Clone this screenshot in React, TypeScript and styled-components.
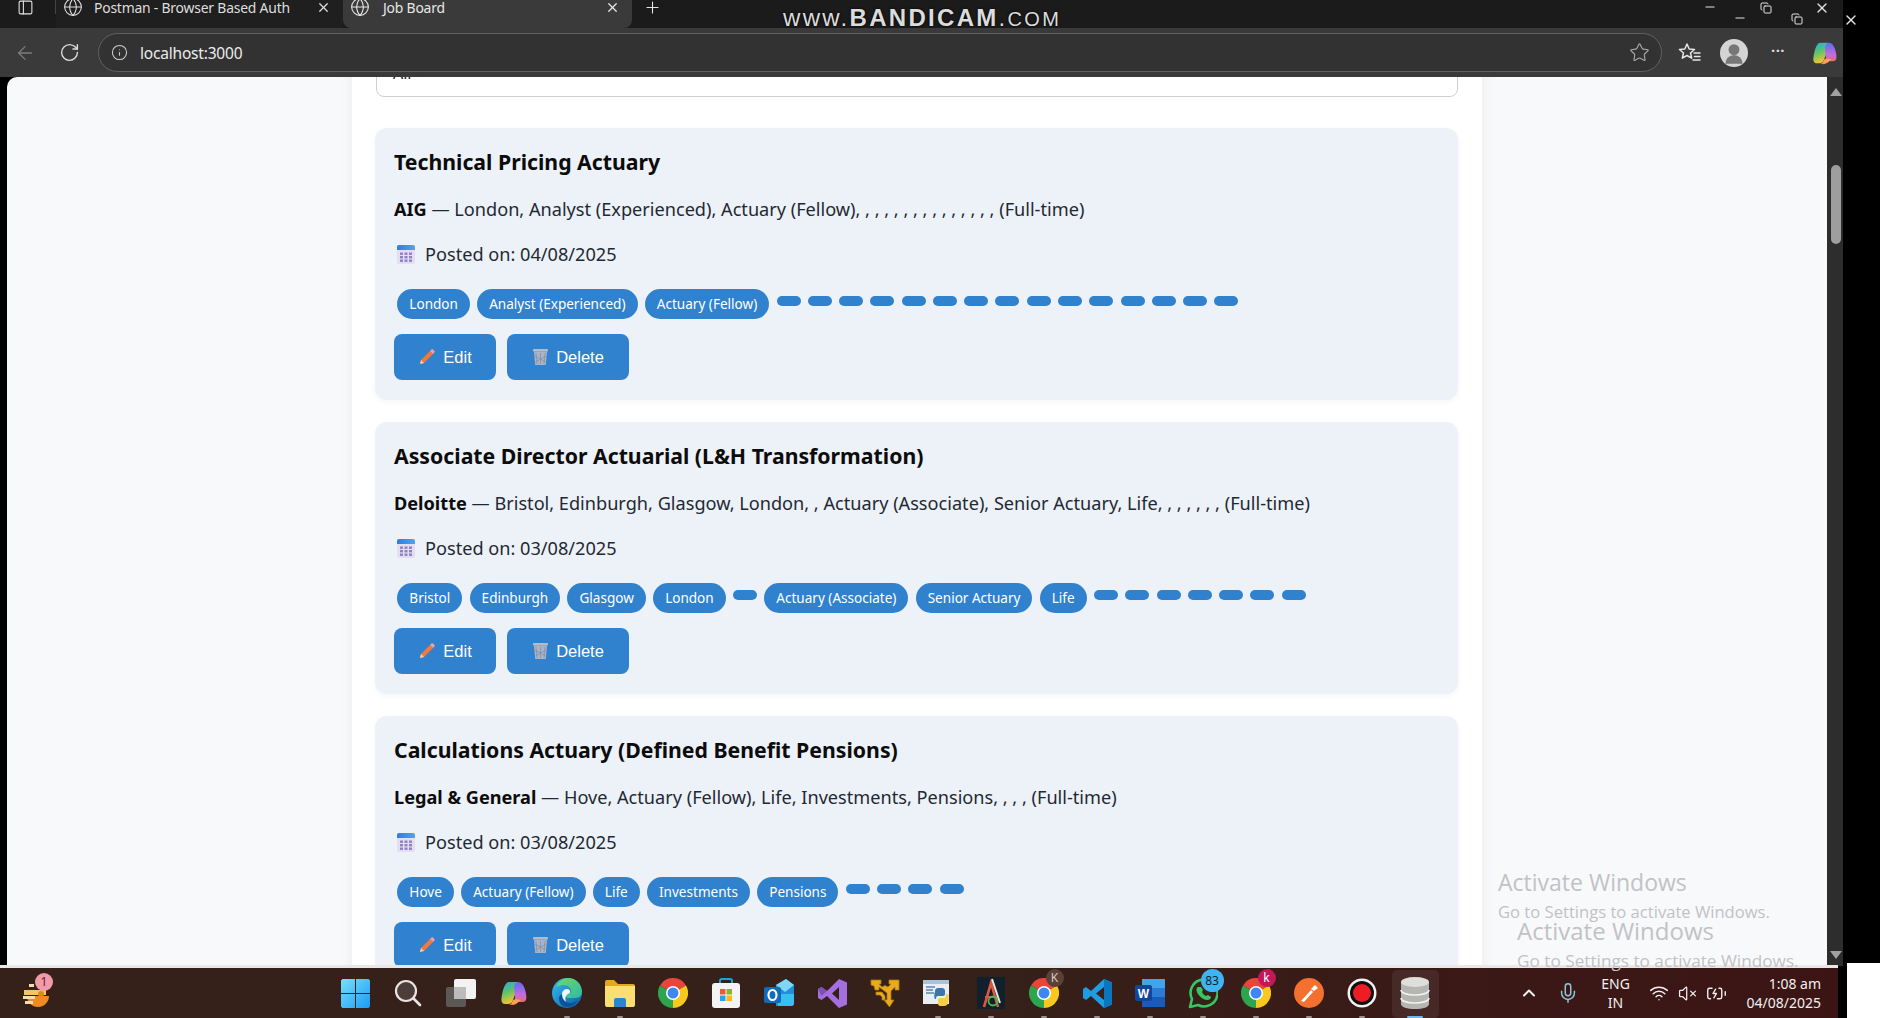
import React from "react";
import styled, { createGlobalStyle } from "styled-components";
import { ArrowLeft, RotateCw, Info, Star, Globe, PanelLeft, Plus, X, Minus, Copy, ChevronUp, Mic, Wifi, VolumeX, BatteryCharging, UserRound } from "lucide-react";

const Global = createGlobalStyle`
  html, body { margin: 0; padding: 0; background: #000; overflow: hidden; }
  * { box-sizing: border-box; }
`;

const UI = `"Noto Sans", "Open Sans", sans-serif`;

const Screen = styled.div`
  position: relative;
  width: 1880px;
  height: 1018px;
  background: #000;
  overflow: hidden;
  display: flex;
  flex-direction: column;
  font-family: ${UI};
`;
const Browser = styled.div`
  width: 1843px;
  height: 966px;
  display: flex;
  flex-direction: column;
  flex: none;
`;
const TitleBar = styled.div`
  height: 28px;
  flex: none;
  background: #1b1b1b;
  display: flex;
  align-items: flex-start;
  color: #e6e6e6;
`;
const SideToggle = styled.div`
  width: 56px;
  height: 14px;
  padding-left: 17px;
  display: flex;
  align-items: center;
  border-right: 1px solid #444;
`;
const Tab = styled.div<{ $active?: boolean }>`
  width: ${(p) => (p.$active ? 289 : 287)}px;
  height: 28px;
  padding: 0 12px 14px 7px;
  display: flex;
  align-items: center;
  gap: ${(p) => (p.$active ? 13 : 11)}px;
  font-size: 13.9px;
  letter-spacing: -0.2px;
  background: ${(p) => (p.$active ? "#3a3a3a" : "#1f1f1f")};
  border-radius: 0 0 ${(p) => (p.$active ? "8px 8px" : "0 0")};
  color: ${(p) => (p.$active ? "#e8e8e8" : "#dedede")};
`;
const TabLabel = styled.span`
  flex: 1;
  white-space: nowrap;
`;
const NewTab = styled.div`
  padding: 0 0 0 11px;
  height: 14px;
  display: flex;
  align-items: center;
`;
const Watermark = styled.div`
  position: absolute;
  left: 783px;
  top: 5px;
  color: #dcdcdc;
  font-family: "Liberation Sans", sans-serif;
  font-size: 24px;
  line-height: 26px;
  letter-spacing: 2.3px;
  white-space: nowrap;
  text-shadow: 0 0 3px #000;
  b { font-weight: 700; }
  small { font-size: 20px; }
`;
const GhostControl = styled.div<{ $x: number; $y: number }>`
  position: absolute;
  left: ${(p) => p.$x}px;
  top: ${(p) => p.$y}px;
  color: #e4e4e4;
  display: flex;
`;
const Toolbar = styled.div`
  height: 49px;
  flex: none;
  background: #3a3a3a;
  display: flex;
  align-items: center;
  color: #d8d8d8;
`;
const NavButton = styled.div<{ $w: number; $dim?: boolean }>`
  width: ${(p) => p.$w}px;
  flex: none;
  display: flex;
  align-items: center;
  justify-content: center;
  color: ${(p) => (p.$dim ? "#7c7c7c" : "#dcdcdc")};
`;
const AddressBar = styled.div`
  flex: none;
  width: 1564px;
  height: 39px;
  margin-left: 10px;
  padding: 0 11px 0 12px;
  border: 1.5px solid #616161;
  border-radius: 20px;
  background: #323232;
  display: flex;
  align-items: center;
  gap: 12px;
`;
const Url = styled.span`
  flex: 1;
  color: #ececec;
  font-size: 15.5px;
  letter-spacing: -0.2px;
`;
const Avatar = styled.div`
  width: 28px;
  height: 28px;
  border-radius: 50%;
  background: #d4d4d4;
  color: #777;
  overflow: hidden;
  display: flex;
  align-items: flex-end;
  justify-content: center;
`;
const Dots = styled.span`
  font-size: 15px;
  font-weight: 700;
  letter-spacing: 0.5px;
  line-height: 1;
  transform: translateY(-2px);
`;
const Stage = styled.div`
  flex: 1;
  min-height: 0;
  display: flex;
  padding-left: 7px;
  background: #000;
`;
const Viewport = styled.main`
  flex: 1;
  background: #f8f9fb;
  border-radius: 10px 0 0 0;
  overflow: hidden;
`;
const Column = styled.div`
  width: 1130px;
  margin: -20px auto 0;
  padding: 0 24px 0 23px;
  background: #fff;
  box-shadow: 0 0 14px rgba(0, 0, 0, 0.06);
`;
const FilterBox = styled.div`
  height: 40px;
  width: 1082px;
  margin-left: 1px;
  margin-bottom: 31px;
  padding: 5px 16px 0;
  border: 1px solid #cfcfcf;
  border-radius: 8px;
  background: #fff;
  font-size: 16px;
  line-height: 20px;
  color: #222;
`;
const Card = styled.article`
  height: 272px;
  margin-top: 30px;
  margin-bottom: -8px;
  padding: 18px 18px 0 19px;
  border-radius: 12px;
  background: #edf1f8;
  box-shadow: 0 2px 6px rgba(0, 0, 0, 0.04);
`;
const JobTitle = styled.h2`
  margin: 0;
  font-size: 21.25px;
  line-height: 32px;
  font-weight: 700;
  color: #0c0c0c;
`;
const Company = styled.p`
  margin: 17px 0 0;
  font-size: 18.15px;
  line-height: 28px;
  color: #1f2933;
  white-space: nowrap;
  b { color: #0c0c0c; font-weight: 700; }
`;
const Posted = styled.p`
  margin: 17px 0 0;
  font-size: 18.15px;
  line-height: 28px;
  color: #1f2933;
  display: flex;
  align-items: center;
  gap: 9px;
  svg { margin-left: 2px; }
`;
const TagRow = styled.div`
  margin-top: 17px;
  margin-left: -0.3px;
  height: 38px;
  white-space: nowrap;
  font-size: 13.55px;
`;
const Tag = styled.span`
  display: inline-block;
  margin: 4px 3.65px 3px;
  padding: 5px 12px;
  border-radius: 15px;
  background: #3182ce;
  color: #fff;
  font-size: 13.55px;
  line-height: 20px;
`;
const Actions = styled.div`
  margin-top: 11px;
  display: flex;
  gap: 11px;
`;
const ActionButton = styled.button<{ $w: number }>`
  width: ${(p) => p.$w}px;
  height: 46px;
  padding: 0;
  border: 0;
  border-radius: 8px;
  background: #3182ce;
  color: #fff;
  font-family: "Liberation Sans", sans-serif;
  font-size: 16.5px;
  display: flex;
  align-items: center;
  justify-content: center;
  gap: 7px;
`;
const ScrollBar = styled.div`
  width: 16px;
  flex: none;
  background: #2d2d2d;
  display: flex;
  flex-direction: column;
  align-items: center;
  padding: 11px 0 7px 1px;
`;
const ScrollArrow = styled.div<{ $down?: boolean }>`
  width: 0;
  height: 0;
  border-left: 6px solid transparent;
  border-right: 6px solid transparent;
  ${(p) => (p.$down ? "border-top: 8px solid #a0a0a0;" : "border-bottom: 8px solid #a0a0a0;")}
`;
const ScrollThumb = styled.div`
  width: 10px;
  height: 79px;
  margin-top: 69px;
  border-radius: 5px;
  background: #9e9e9e;
`;
const ScrollSpacer = styled.div`
  flex: 1;
`;
const ActivateTitle = styled.div<{ $x: number; $y: number; $size: number }>`
  position: absolute;
  left: ${(p) => p.$x}px;
  top: ${(p) => p.$y}px;
  color: #c2c2c4;
  font-family: "Open Sans", sans-serif;
  font-size: ${(p) => p.$size}px;
  line-height: 1.2;
  white-space: nowrap;
`;
const Separator = styled.div`
  height: 3px;
  width: 1838px;
  flex: none;
  background: #e8e8e8;
  margin-top: -1px;
`;
const Taskbar = styled.footer`
  width: 1838px;
  height: 50px;
  flex: none;
  background: linear-gradient(90deg, #35211a 0%, #35211a 50%, #3a1917 80%, #3c1414 100%);
  display: flex;
  align-items: center;
  color: #f0f0f0;
`;
const Widget = styled.div`
  position: relative;
  width: 72px;
  display: flex;
  justify-content: center;
`;
const Pinned = styled.div`
  margin-left: 256.5px;
  display: flex;
`;
const PinCell = styled.div<{ $open?: boolean; $active?: boolean }>`
  position: relative;
  width: 53px;
  height: 50px;
  display: flex;
  align-items: center;
  justify-content: center;
  &::before {
    content: "";
    display: ${(p) => (p.$active ? "block" : "none")};
    position: absolute;
    left: 3px;
    right: 3px;
    top: 2px;
    bottom: 0;
    border-radius: 5px;
    background: rgba(255, 255, 255, 0.07);
  }
  &::after {
    content: "";
    display: ${(p) => (p.$open || p.$active ? "block" : "none")};
    position: absolute;
    bottom: 0;
    left: 50%;
    width: ${(p) => (p.$active ? 16 : 6)}px;
    height: 2px;
    margin-left: ${(p) => (p.$active ? -8 : -3)}px;
    border-radius: 1px;
    background: ${(p) => (p.$active ? "#6cb8e6" : "#9a8f8a")};
  }
  svg { position: relative; }
`;
const Badge = styled.span<{ $bg: string; $x: number; $y: number; $size: number; $color?: string }>`
  position: absolute;
  left: ${(p) => p.$x}px;
  top: ${(p) => p.$y}px;
  min-width: ${(p) => p.$size}px;
  height: ${(p) => p.$size}px;
  border-radius: ${(p) => p.$size / 2}px;
  background: ${(p) => p.$bg};
  color: ${(p) => p.$color || "#fff"};
  font-size: 12px;
  line-height: ${(p) => p.$size}px;
  text-align: center;
  padding: 0 1px;
`;
const Tray = styled.div`
  margin-left: auto;
  padding-right: 17px;
  display: flex;
  align-items: center;
  font-size: 14px;
`;
const TrayIcon = styled.div<{ $w: number; $color?: string }>`
  width: ${(p) => p.$w}px;
  display: flex;
  justify-content: center;
  color: ${(p) => p.$color || "#f0f0f0"};
`;
const Lang = styled.div`
  width: 48px;
  margin-right: 4px;
  text-align: center;
  line-height: 19px;
`;
const Clock = styled.div`
  margin-left: 15px;
  text-align: right;
  line-height: 19px;
  white-space: nowrap;
`;
const CornerBlock = styled.div`
  position: absolute;
  left: 1847px;
  top: 963px;
  width: 33px;
  height: 55px;
  background: #fff;
`;

/* ---------- drawings ---------- */

const Calendar = () => (
  <svg width="20" height="21" viewBox="0 0 20 21">
    <defs>
      <linearGradient id="calTop" x1="0" y1="0" x2="1" y2="0">
        <stop offset="0" stopColor="#2f7de0" />
        <stop offset="1" stopColor="#4aa6f0" />
      </linearGradient>
    </defs>
    <rect x="1" y="1" width="18" height="19" rx="2" fill="#e4def2" />
    <path d="M1 6V3a2 2 0 0 1 2-2h14a2 2 0 0 1 2 2v3z" fill="url(#calTop)" />
    {[4, 8.5, 13].map((x) =>
      [8.5, 12, 15.5].map((y) => <rect key={`${x}-${y}`} x={x} y={y} width="3" height="2.4" fill="#8d82c4" />)
    )}
  </svg>
);
const Pencil = () => (
  <svg width="18" height="18" viewBox="0 0 18 18">
    <path d="M3 12 12 3l3 3-9 9-4 1z" fill="#f2793a" />
    <path d="M12 3l1.4-1.4a1.2 1.2 0 0 1 1.7 0l1.3 1.3a1.2 1.2 0 0 1 0 1.7L15 6z" fill="#f4a0a0" />
    <path d="M3 12l3 3-4 1z" fill="#f6cfa8" />
  </svg>
);
const Trash = () => (
  <svg width="17" height="18" viewBox="0 0 17 18">
    <rect x="1" y="1" width="15" height="2.5" rx="0.8" fill="#b4bccb" />
    <path d="M2 3.5h13L13.8 17H3.2z" fill="#aab4c6" />
    <path d="M4 5l1 11M8.5 5v11M13 5l-1 11M3 8l10.5 6M14 8 3.5 14" stroke="#8492aa" strokeWidth="0.8" fill="none" />
  </svg>
);
const WidgetIcon = () => (
  <svg width="30" height="34" viewBox="0 0 30 34">
    <path d="M6 20h22a11 11 0 0 1-22 0z" fill="#f08b1f" />
    <path d="M3 14h22v5H3z" fill="#f3c65e" />
    <path d="M8 8h5v3H8zM2 20h12v3H2zM4 25h8v3H4z" fill="#f3dfae" />
    <circle cx="20" cy="18" r="3" fill="#d58a27" />
  </svg>
);
const WinLogo = () => (
  <svg width="29" height="29" viewBox="0 0 29 29">
    <defs>
      <linearGradient id="winG" x1="0" y1="0" x2="1" y2="1">
        <stop offset="0" stopColor="#78e0fb" />
        <stop offset="1" stopColor="#1a9bf2" />
      </linearGradient>
    </defs>
    <path d="M0 1.5 1.5 0H14v14H0zM15 0h12.5L29 1.5V14H15zM0 15h14v14H1.5L0 27.5zM15 15h14v12.5L27.5 29H15z" fill="url(#winG)" />
  </svg>
);
const SearchIcon = () => (
  <svg width="28" height="28" viewBox="0 0 28 28">
    <circle cx="12" cy="12" r="10" fill="#4d3e39" stroke="#e8e4e2" strokeWidth="2.2" />
    <path d="M19.5 19.5 26 26" stroke="#e8e4e2" strokeWidth="2.6" strokeLinecap="round" />
  </svg>
);
const TaskView = () => (
  <svg width="30" height="28" viewBox="0 0 30 28">
    <rect x="0" y="8" width="20" height="20" rx="2" fill="#5b5856" />
    <rect x="8" y="0" width="22" height="20" rx="2" fill="#f2f2f2" />
    <rect x="8" y="8" width="12" height="12" fill="#bdbcbc" />
  </svg>
);
const CopilotIcon = ({ size = 28 }: { size?: number }) => (
  <svg width={size} height={size} viewBox="0 0 28 28">
    <defs>
      <linearGradient id="cpA" x1="0" y1="0" x2="0.3" y2="1">
        <stop offset="0" stopColor="#2aa8e8" />
        <stop offset="0.5" stopColor="#5ac46a" />
        <stop offset="1" stopColor="#f4c430" />
      </linearGradient>
      <linearGradient id="cpB" x1="0" y1="0" x2="0" y2="1">
        <stop offset="0" stopColor="#5b6cf0" />
        <stop offset="0.55" stopColor="#c66ae0" />
        <stop offset="1" stopColor="#f0703c" />
      </linearGradient>
    </defs>
    <path d="M9 3h7c2 0 3 .5 3 2l-6 16c-1 3-3 4-5 4H5c-3 0-4-3-3.500-6C2.500 11 5 3 9 3z" fill="url(#cpA)" />
    <path d="M14 8c.6-3 2-5 4-5 3 0 5 2 6.500 6 1.500 5 2.500 9 1.500 12-1 2-3 2-5 2h-3c-1 2-3 3-6 3-2 0-3-1-3-1 3 0 5-2 6-6z" fill="url(#cpB)" />
    <path d="M13 21c2-1 5-1 8 0l-4 3c-2 1-4 2-6 1.500z" fill="#f6a25a" />
  </svg>
);
const EdgeIcon = () => (
  <svg width="30" height="30" viewBox="0 0 30 30">
    <defs>
      <linearGradient id="edA" x1="0" y1="0" x2="1" y2="1">
        <stop offset="0" stopColor="#35c1f1" />
        <stop offset="1" stopColor="#0c59a4" />
      </linearGradient>
      <linearGradient id="edB" x1="0" y1="0" x2="1" y2="1">
        <stop offset="0" stopColor="#6fdb62" />
        <stop offset="1" stopColor="#2fb9a8" />
      </linearGradient>
    </defs>
    <circle cx="15" cy="15" r="15" fill="url(#edA)" />
    <path d="M4 9C7 3 12 0 16 0c8 0 14 6 14 14 0 5-4 6-8 6h-5c-2 0-3-1-3-2 1-3 5-1 5-5 0-3-3-6-8-6-3 0-5 1-7 2z" fill="url(#edB)" />
    <path d="M12 16c-1 4 1 9 6 9 3 0 6-1 8-3-3 5-7 7-11 7-5 0-8-4-8-9 0-2 2-4 5-4z" fill="#0b5296" />
    <path d="M15 11a5 5 0 0 0-5 5c0 3 1 6 4 8-1-3-1-6 2-8 3 0 3-5-1-5z" fill="#eef7fb" />
  </svg>
);
const FolderIcon = () => (
  <svg width="30" height="28" viewBox="0 0 30 28">
    <path d="M0 3a2 2 0 0 1 2-2h7l4 4h15a2 2 0 0 1 2 2v3H0z" fill="#e2a81e" />
    <path d="M0 7h30v19a2 2 0 0 1-2 2H2a2 2 0 0 1-2-2z" fill="#fbdf72" />
    <path d="M9 21a2 2 0 0 1 2-2h8a2 2 0 0 1 2 2v7H9z" fill="#2a86d4" />
  </svg>
);
const ChromeIcon = () => (
  <svg width="30" height="30" viewBox="0 0 30 30">
    <path d="M15 15 2 7.5A15 15 0 0 1 28 7.5z" fill="#e9453a" />
    <path d="M15 15 28 7.5A15 15 0 0 1 15 30z" fill="#f8c91c" />
    <path d="M15 15 15 30A15 15 0 0 1 2 7.5z" fill="#2ea44f" />
    <circle cx="15" cy="15" r="7" fill="#fff" />
    <circle cx="15" cy="15" r="5.5" fill="#3f86f0" />
  </svg>
);
const StoreIcon = () => (
  <svg width="30" height="30" viewBox="0 0 30 30">
    <path d="M9 6V3a2 2 0 0 1 2-2h8a2 2 0 0 1 2 2v3" fill="none" stroke="#1ea5d8" strokeWidth="2" />
    <rect x="1" y="5" width="28" height="25" rx="3" fill="#f4f4f4" />
    <rect x="9" y="11" width="5.5" height="5.5" fill="#f15b2c" />
    <rect x="15.5" y="11" width="5.5" height="5.5" fill="#7fbb2a" />
    <rect x="9" y="17.5" width="5.5" height="5.5" fill="#2aa3ef" />
    <rect x="15.5" y="17.5" width="5.5" height="5.5" fill="#fdb813" />
  </svg>
);
const OutlookIcon = () => (
  <svg width="30" height="28" viewBox="0 0 30 28">
    <path d="M12 6 22 0l8 6v18a3 3 0 0 1-3 3H12z" fill="#1f8fdc" />
    <path d="M14 15h16v9a3 3 0 0 1-3 3H14z" fill="#35c0ee" />
    <path d="M12 6 22 0l8 6-9 7z" fill="#7fd6f7" />
    <rect x="0" y="8" width="17" height="16" rx="2" fill="#0f6cbd" />
    <ellipse cx="8.5" cy="16" rx="4" ry="5" fill="none" stroke="#fff" strokeWidth="2.2" />
  </svg>
);
const VsIcon = () => (
  <svg width="29" height="29" viewBox="0 0 29 29">
    <path d="M21 0 29 3.5v22L21 29 9 17l-5.500 4L0 19V10l3.500-2L9 12zM21 8l-7 6.500 7 6.500z" fill="#a56fe0" fillRule="evenodd" />
    <path d="M0 10l3.500-2L9 12l-5.500 5z" fill="#7e50b8" />
  </svg>
);
const ArrowsIcon = () => (
  <svg width="30" height="30" viewBox="0 0 30 30">
    <path d="M1 2h10v4H9l3 3 3-1.500L18 9l3-3h-2V2h10v10h-4V9l-4 4v9h3l-4.500 7L14 22h3v-7l-8-6v3H5l-1-4-3-1z" fill="#e9ab1d" stroke="#a87a10" strokeWidth="0.8" />
    <path d="M6 14h6l3 4v4h-3v-3l-2-2H6z" fill="#e9ab1d" stroke="#a87a10" strokeWidth="0.8" />
  </svg>
);
const PyDocIcon = () => (
  <svg width="30" height="30" viewBox="0 0 30 30">
    <rect x="0" y="2" width="26" height="24" fill="#e9eef3" />
    <rect x="0" y="2" width="26" height="4" fill="#a8c3dc" />
    <path d="M3 9h9M3 12h7M3 15h8" stroke="#5f86ad" strokeWidth="1.3" />
    <path d="M12 14c0-3 1-4 4-4h3c2 0 3 1 3 3v3c0 2-2 2-3 2h-4c-2 0-2 2-2 3h-1c-1-1-1-5 0-7z" fill="#3a76ad" />
    <path d="M25 16c1 1 1 7 0 8 0 3-2 4-4 4h-3c-3 0-3-2-3-3v-3c0-2 2-2 3-2h3c2 0 2-2 2-4z" fill="#f5cf45" />
  </svg>
);
const AppAIcon = () => (
  <svg width="28" height="32" viewBox="0 0 28 32">
    <rect width="28" height="32" fill="#10202c" />
    <path d="M7 30 14 6l7 24" fill="none" stroke="#e2553a" strokeWidth="2.6" />
    <path d="M15 2l8 24" stroke="#e8e8e8" strokeWidth="2" />
    <path d="M8 20h12" stroke="#e2553a" strokeWidth="2" />
    <circle cx="16" cy="24" r="4.500" fill="none" stroke="#48b85a" strokeWidth="1.800" />
  </svg>
);
const VsCodeIcon = () => (
  <svg width="29" height="29" viewBox="0 0 29 29">
    <path d="M21 0 29 3.500v22L21 29 8 17l-5 4-3-2v-9l3-2 5 4z" fill="#1f9de2" />
    <path d="M21 0 29 3.500v22L21 29z" fill="#0a76bf" />
    <path d="M21 8v13l-8-6.500z" fill="#35201a" />
  </svg>
);
const WordIcon = () => (
  <svg width="30" height="28" viewBox="0 0 30 28">
    <rect x="7" y="0" width="23" height="28" rx="2" fill="#2b7cd3" />
    <rect x="7" y="0" width="23" height="9" fill="#41a5ee" />
    <rect x="7" y="18" width="23" height="10" fill="#185abd" />
    <rect x="0" y="6" width="17" height="16" rx="2" fill="#10479c" />
    <text x="8.500" y="19" fill="#fff" fontSize="12" fontWeight="700" textAnchor="middle" fontFamily="Liberation Sans">W</text>
  </svg>
);
const WhatsAppIcon = () => (
  <svg width="30" height="32" viewBox="0 0 30 32">
    <path d="M2 30l2-8A13.500 13.500 0 1 1 10 28z" fill="#35201a" stroke="#39c561" strokeWidth="2.600" strokeLinejoin="round" />
    <path d="M10 10c-2 1-2 4 0 7s6 6 9 6 4-2 4-3l-3-2-2 1c-2-1-3-2-4-4l1-2-2-3z" fill="#39c561" />
  </svg>
);
const PostmanIcon = () => (
  <svg width="30" height="30" viewBox="0 0 30 30">
    <circle cx="15" cy="15" r="15" fill="#f3702f" />
    <path d="M7 23 17 12l2 2-9 10zM17 11l4-4 3 3-4 3z" fill="#fff" />
  </svg>
);
const RecordIcon = () => (
  <svg width="30" height="30" viewBox="0 0 30 30">
    <circle cx="15" cy="15" r="14.500" fill="#f2f2f2" />
    <circle cx="15" cy="15" r="12" fill="#101010" />
    <circle cx="15" cy="15" r="9" fill="#ee1c25" />
  </svg>
);
const DbIcon = () => (
  <svg width="30" height="32" viewBox="0 0 30 32">
    <path d="M1 5v22c0 3 6 5 14 5s14-2 14-5V5z" fill="#b5b5b2" />
    <ellipse cx="15" cy="5" rx="14" ry="5" fill="#dededb" />
    <path d="M1 13c0 3 6 5 14 5s14-2 14-5M1 21c0 3 6 5 14 5s14-2 14-5" fill="none" stroke="#f0f0ee" strokeWidth="1.600" />
  </svg>
);
const FavsIcon = () => (
  <svg width="24" height="24" viewBox="0 0 24 24" fill="none" stroke="#e6e6e6" strokeWidth="1.500" strokeLinejoin="round">
    <path d="M9 3l2.200 5 5.300.5-4 3.500 1.200 5.200L9 14.500 4.300 17.200 5.500 12l-4-3.500 5.300-.5z" />
    <path d="M16 12h6M16.500 15.500h5.500M15 19h7" strokeLinecap="round" />
  </svg>
);

/* ---------- data ---------- */

const blanks = (n: number) => Array.from({ length: n }, () => "");

const jobs = [
  {
    title: "Technical Pricing Actuary",
    company: "AIG",
    date: "04/08/2025",
    tags: ["London", "Analyst (Experienced)", "Actuary (Fellow)", ...blanks(15)],
  },
  {
    title: "Associate Director Actuarial (L&H Transformation)",
    company: "Deloitte",
    date: "03/08/2025",
    tags: ["Bristol", "Edinburgh", "Glasgow", "London", "", "Actuary (Associate)", "Senior Actuary", "Life", ...blanks(7)],
  },
  {
    title: "Calculations Actuary (Defined Benefit Pensions)",
    company: "Legal & General",
    date: "03/08/2025",
    tags: ["Hove", "Actuary (Fellow)", "Life", "Investments", "Pensions", ...blanks(4)],
  },
];

const pinned: { icon: React.ReactNode; open?: boolean; active?: boolean; badge?: React.ReactNode }[] = [
  { icon: <WinLogo /> },
  { icon: <SearchIcon /> },
  { icon: <TaskView /> },
  { icon: <CopilotIcon /> },
  { icon: <EdgeIcon />, open: true },
  { icon: <FolderIcon />, open: true },
  { icon: <ChromeIcon /> },
  { icon: <StoreIcon /> },
  { icon: <OutlookIcon /> },
  { icon: <VsIcon /> },
  { icon: <ArrowsIcon /> },
  { icon: <PyDocIcon />, open: true },
  { icon: <AppAIcon />, open: true },
  { icon: <ChromeIcon />, open: true, badge: <Badge $bg="#5b4038" $x={28} $y={1} $size={18} $color="#d8c8c0">K</Badge> },
  { icon: <VsCodeIcon />, open: true },
  { icon: <WordIcon />, open: true },
  { icon: <WhatsAppIcon />, open: true, badge: <Badge $bg="#3fb4f0" $x={24} $y={1} $size={23} $color="#10242e">83</Badge> },
  { icon: <ChromeIcon />, open: true, badge: <Badge $bg="#c2185b" $x={28} $y={1} $size={18}>k</Badge> },
  { icon: <PostmanIcon />, open: true },
  { icon: <RecordIcon />, open: true },
  { icon: <DbIcon />, active: true },
];

export default function App() {
  return (
    <Screen>
      <Global />
      <Browser>
        <TitleBar>
          <SideToggle>
            <PanelLeft size={17} strokeWidth={1.5} />
          </SideToggle>
          <Tab>
            <Globe size={20} strokeWidth={1.3} />
            <TabLabel>Postman - Browser Based Auth</TabLabel>
            <X size={15} />
          </Tab>
          <Tab $active>
            <Globe size={20} strokeWidth={1.3} />
            <TabLabel>Job Board</TabLabel>
            <X size={15} />
          </Tab>
          <NewTab>
            <Plus size={19} strokeWidth={1.4} />
          </NewTab>
        </TitleBar>
        <Toolbar>
          <NavButton $w={50} $dim>
            <ArrowLeft size={22} strokeWidth={1.4} />
          </NavButton>
          <NavButton $w={38}>
            <RotateCw size={21} strokeWidth={1.6} />
          </NavButton>
          <AddressBar>
            <Info size={17} strokeWidth={1.5} color="#cfcfcf" />
            <Url>localhost:3000</Url>
            <Star size={21} strokeWidth={1.3} color="#a8a8a8" />
          </AddressBar>
          <NavButton $w={56}>
            <FavsIcon />
          </NavButton>
          <NavButton $w={32}>
            <Avatar>
              <UserRound size={26} strokeWidth={0} fill="#777" />
            </Avatar>
          </NavButton>
          <NavButton $w={56}>
            <Dots>···</Dots>
          </NavButton>
          <NavButton $w={38}>
            <CopilotIcon size={26} />
          </NavButton>
        </Toolbar>
        <Stage>
          <Viewport>
            <Column>
              <FilterBox>All</FilterBox>
              {jobs.map((job) => (
                <Card key={job.title}>
                  <JobTitle>{job.title}</JobTitle>
                  <Company>
                    <b>{job.company}</b> — {job.tags.join(", ")} (Full-time)
                  </Company>
                  <Posted>
                    <Calendar />
                    Posted on: {job.date}
                  </Posted>
                  <TagRow>
                    {job.tags.map((tag, i) => (
                      <Tag key={i}>{tag}</Tag>
                    ))}
                  </TagRow>
                  <Actions>
                    <ActionButton $w={102}>
                      <Pencil />
                      Edit
                    </ActionButton>
                    <ActionButton $w={122}>
                      <Trash />
                      Delete
                    </ActionButton>
                  </Actions>
                </Card>
              ))}
            </Column>
          </Viewport>
          <ScrollBar>
            <ScrollArrow />
            <ScrollThumb />
            <ScrollSpacer />
            <ScrollArrow $down />
          </ScrollBar>
        </Stage>
      </Browser>
      <Separator />
      <Taskbar>
        <Widget>
          <WidgetIcon />
          <Badge $bg="#f39aa8" $x={35} $y={-3} $size={18} $color="#5a1f2a">1</Badge>
        </Widget>
        <Pinned>
          {pinned.map((p, i) => (
            <PinCell key={i} $open={p.open} $active={p.active}>
              {p.icon}
              {p.badge}
            </PinCell>
          ))}
        </Pinned>
        <Tray>
          <TrayIcon $w={30}>
            <ChevronUp size={20} strokeWidth={2.4} />
          </TrayIcon>
          <TrayIcon $w={48} $color="#8fc8dc">
            <Mic size={22} strokeWidth={1.6} />
          </TrayIcon>
          <Lang>
            ENG
            <br />
            IN
          </Lang>
          <TrayIcon $w={30}>
            <Wifi size={20} strokeWidth={1.8} />
          </TrayIcon>
          <TrayIcon $w={28}>
            <VolumeX size={19} strokeWidth={1.6} />
          </TrayIcon>
          <TrayIcon $w={30}>
            <BatteryCharging size={21} strokeWidth={1.6} />
          </TrayIcon>
          <Clock>
            1:08 am
            <br />
            04/08/2025
          </Clock>
        </Tray>
      </Taskbar>

      <Watermark>
        www.<b>BANDICAM</b>.<small>COM</small>
      </Watermark>
      <GhostControl $x={1703} $y={0}><Minus size={14} /></GhostControl>
      <GhostControl $x={1733} $y={11}><Minus size={14} /></GhostControl>
      <GhostControl $x={1760} $y={2}><Copy size={12} /></GhostControl>
      <GhostControl $x={1791} $y={13}><Copy size={12} /></GhostControl>
      <GhostControl $x={1814} $y={0}><X size={16} /></GhostControl>
      <GhostControl $x={1843} $y={12}><X size={16} /></GhostControl>
      <ActivateTitle $x={1498} $y={869} $size={23}>Activate Windows</ActivateTitle>
      <ActivateTitle $x={1498} $y={902} $size={16.6}>Go to Settings to activate Windows.</ActivateTitle>
      <ActivateTitle $x={1517} $y={917} $size={24}>Activate Windows</ActivateTitle>
      <ActivateTitle $x={1517} $y={951} $size={17.2}>Go to Settings to activate Windows.</ActivateTitle>
      <CornerBlock />
    </Screen>
  );
}
